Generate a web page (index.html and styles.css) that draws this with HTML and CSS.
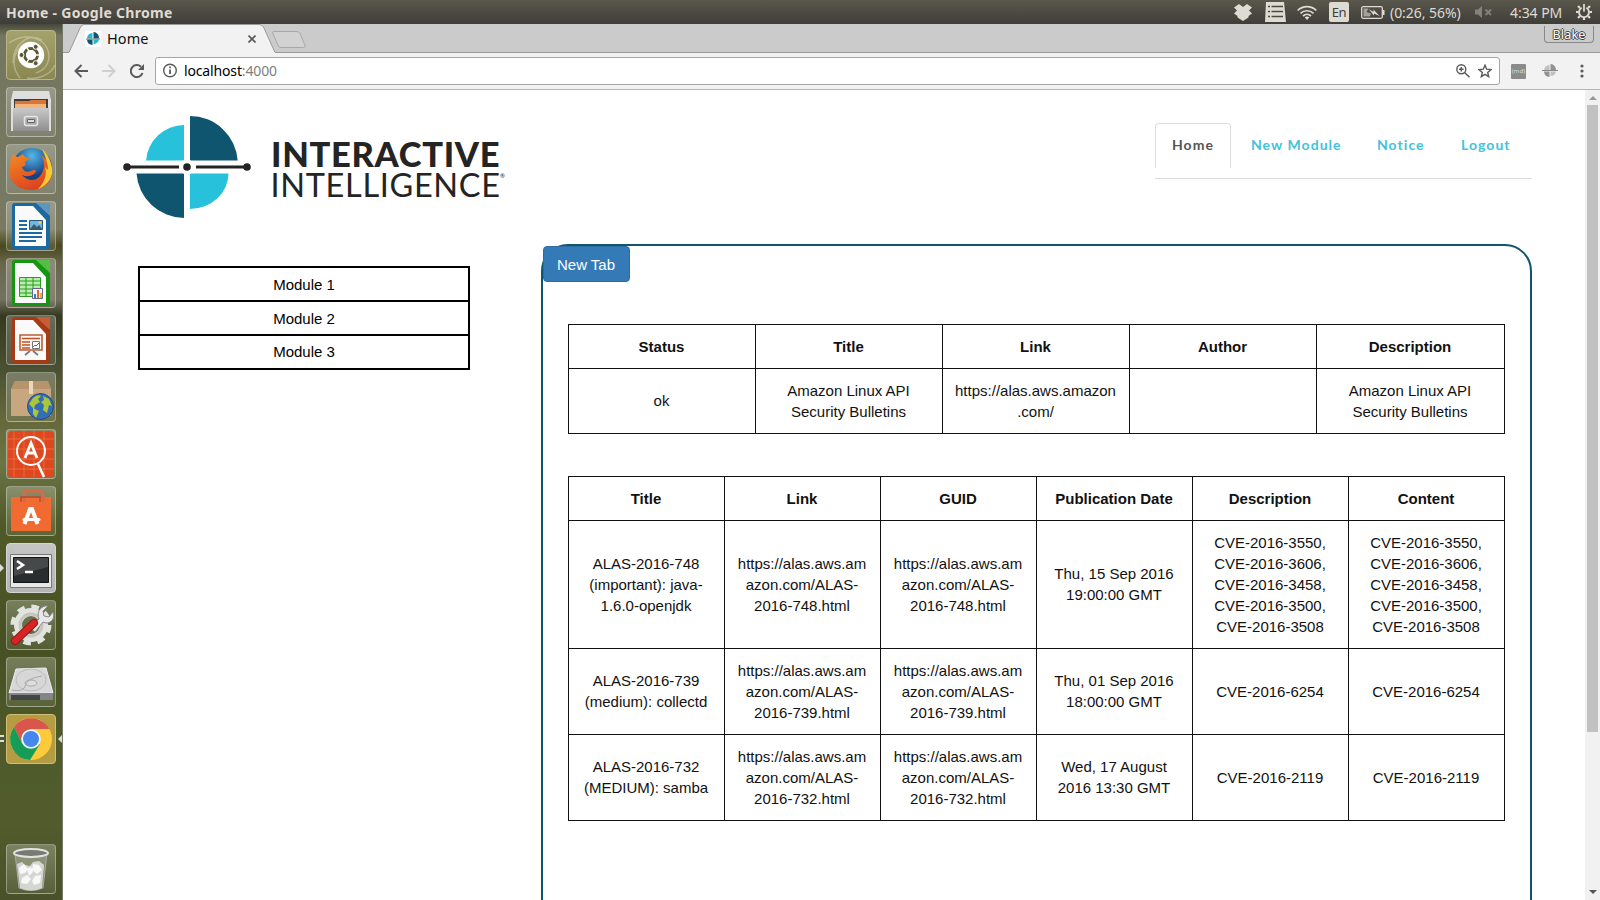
FILE: index.html
```html
<!DOCTYPE html>
<html lang="en">
<head>
<meta charset="utf-8">
<title>Home</title>
<link rel="stylesheet" href="styles.css">
</head>
<body>
<header class="topbar">
  <span class="window-title">Home - Google Chrome</span>
  <div class="indicators">
    <svg class="ind-dropbox" width="18" height="17" viewBox="0 0 18 17"><path fill="#dfdbd2" d="M5 0 9 3 13 0 18 3.500 15 6.500 18 9.500 14.500 12v1.500L9 17 3.500 13.500V12L0 9.500 3 6.500 0 3.500z"/></svg>
    <svg class="ind-list" width="21" height="20" viewBox="0 0 21 20"><path fill="#dfdbd2" d="M1 0h18l2 20H0z"/><path stroke="#4a4843" stroke-width="1.500" d="M3 4.500h2M6.500 4.500H18M3 9.500h2M6.500 9.500H18M3 14.500h2M6.500 14.500H18"/></svg>
    <svg class="ind-wifi" width="20" height="15" viewBox="0 0 20 15"><g fill="none" stroke="#dfdbd2" stroke-width="1.700"><path d="M.7 5.500a13 13 0 0 1 18.600 0M3.500 8.300a9.500 9.500 0 0 1 13 0M6 11a6 6 0 0 1 8 0"/></g><path fill="#dfdbd2" d="M7.600 12.300q2.400-1.700 4.800 0L10 15z"/></svg>
    <span class="keyboard">En</span>
    <svg class="ind-battery" width="24" height="13" viewBox="0 0 24 13"><rect x=".7" y=".7" width="20.600" height="11.600" rx="1.500" fill="none" stroke="#dfdbd2" stroke-width="1.300"/><path fill="#a5a199" d="M2.500 2.500h5L5.500 6l4.500 1.500-1 3H2.500z"/><path fill="#dfdbd2" d="M22 4h1.500v5H22zM7.500 3l5 3V3.500L18.500 10l-5.500-2.500v2z"/></svg>
    <span class="battery-text">(0:26, 56%)</span>
    <svg class="ind-mute" width="17" height="12" viewBox="0 0 17 12"><path fill="#85827a" d="M0 3.500h3L7 0v12L3 8.500H0z"/><path stroke="#85827a" stroke-width="1.800" d="m10.500 3.500 5.500 5.500m0-5.500L10.500 9"/></svg>
    <span class="clock">4:34 PM</span>
    <svg class="ind-gear" width="16" height="16" viewBox="0 0 16 16"><g fill="none" stroke="#dfdbd2"><path stroke-width="1.800" d="M5.700 3.700a5 5 0 1 0 4.600 0M8 0v7.500"/><path stroke-width="2.200" d="m2 2 2 2m10-2-2 2M0 8h2.500M16 8h-2.500M2 14l2-2m10 2-2-2M8 16v-2.500"/></g></svg>
  </div>
</header>
<div class="desktop">
  <nav class="launcher">
    <div class="tile dash"><svg viewBox="0 0 50 50"><g fill="none" stroke="#fff" stroke-opacity=".3" stroke-width="1.500"><path d="M3 13C20 1 42 8 43 26c0 9-6 15-13 17M7 33C7 13 23 3 36 10M14 48C2 33 10 14 24 12M21 48c10 2 24-3 28-13"/></g><circle cx="25" cy="25" r="13.200" fill="#fff"/><circle cx="25" cy="25" r="6.500" fill="none" stroke="#5c5734" stroke-width="3"/><path stroke="#fff" stroke-width="1.500" d="M25 25h10M25 25l-5-9M25 25l-5 9"/><circle cx="25" cy="25" r="4.900" fill="#fff"/><g fill="#5c5734" stroke="#fff"><circle cx="15.500" cy="25" r="2.500"/><circle cx="29.700" cy="16.800" r="2.500"/><circle cx="29.700" cy="33.200" r="2.500"/></g></svg></div>
    <div class="tile"><svg viewBox="0 0 50 50"><defs><linearGradient id="grey" x2="0" y2="1"><stop stop-color="#c9c9c9"/><stop offset="1" stop-color="#8f8f8f"/></linearGradient></defs><path fill="#dedede" d="M7 4h36l2 9v31H5V13z"/><path fill="#453b35" d="M8 12h34v10H8z"/><path fill="#d9763c" d="M9 14h14l2-1h15v9H9z"/><path fill="#f3b57a" d="M9 17h31v5H9z"/><path fill="url(#grey)" d="M7 21h36v23H7z"/><rect x="18.500" y="29.500" width="13" height="9" rx="2" fill="#aaa" stroke="#e6e6e6" stroke-width="1.500"/><path fill="#ddd" stroke="#666" d="M21.500 32.500h7v3h-7z"/></svg></div>
    <div class="tile"><svg viewBox="0 0 50 50"><defs><radialGradient id="fxblue" cx=".5" cy=".2"><stop stop-color="#54b8e9"/><stop offset="1" stop-color="#173f82"/></radialGradient><linearGradient id="fxorange" x2=".5" y2="1"><stop stop-color="#f28a23"/><stop offset="1" stop-color="#dc4420"/></linearGradient></defs><circle cx="26" cy="24" r="20" fill="url(#fxblue)"/><path fill="url(#fxorange)" d="M7 10c2 1 3 3 5 3l5-3c1 2 2 4 6 4 0 2-5 3-4 5 2 2 0 3-3 4 1 5 7 6 11 3 3-1 4 1 2 3-4 4-9 4-13 2 8 9 20 6 22-9 0-5-1-8-3-11 8 6 12 14 11 20-2 10-11 15-21 15C9 46 1 34 4 23c0-5 1-9 3-13z"/><path fill="#f9c832" d="M36 5c8 7 11 17 10 25-2 8-8 13-14 15 8-8 9-16 7-22l3 3c0-6-2-12-6-21z"/></svg></div>
    <div class="tile"><svg viewBox="0 0 50 50"><path fill="#1c69a0" d="M9 2h24l11 12v31q0 3-3 3H9q-3 0-3-3V5q0-3 3-3z"/><path fill="#fafafa" d="M9 5h18l13 14v26H9z"/><path fill="#5f96bb" d="M30 2h14v13z"/><path stroke="#1c69a0" stroke-width="1.800" d="M13 20h8m-8 4h8m-8 4h8m-8 4h23m-23 4h23m-23 4h17"/><path fill="#6eb8e6" stroke="#28577b" d="M23.500 19.500h13v9h-13z"/><path fill="#3e5968" d="m24 28 4-5 3 3 2-2 3 4z"/><circle cx="34" cy="21.500" r="1.300" fill="#ffd24a"/></svg></div>
    <div class="tile"><svg viewBox="0 0 50 50"><path fill="#189415" d="M9 2h24l11 12v31q0 3-3 3H9q-3 0-3-3V5q0-3 3-3z"/><path fill="#fafafa" d="M9 5h18l13 14v26H9z"/><path fill="#55bf45" d="M30 2h14v13z"/><path fill="#b8efae" stroke="#2d9c20" d="M13.500 19.500h21v19h-21zM20 19v19m7-19v19M13 23h21m-21 4h21m-21 4h21m-21 4h21"/><path fill="#f4f6fa" stroke="#668" d="M26.500 30.500h10v10h-10z"/><path fill="#3584c6" d="M28 36h2v4h-2z"/><path fill="#ee6332" d="M31 32h2v8h-2z"/><path fill="#efaf35" d="M34 35h2v5h-2z"/></svg></div>
    <div class="tile"><svg viewBox="0 0 50 50"><path fill="#a63a15" d="M9 2h24l11 12v31q0 3-3 3H9q-3 0-3-3V5q0-3 3-3z"/><path fill="#fafafa" d="M9 5h18l13 14v26H9z"/><path fill="#c55e37" d="M30 2h14v13z"/><path fill="#fff4ee" stroke="#b95d38" stroke-width="1.600" d="M14 20h22v15H14z"/><path stroke="#bf5127" stroke-width="1.700" d="M16 23.500h18M16 27h8m-8 3h8m-8 3h8"/><path fill="#fff" stroke="#777" d="M26.500 26.500h7v7h-7z"/><path fill="none" stroke="#2f8c41" d="m27 32 2-2 1 1 3-3"/><path stroke="#777" stroke-width="1.700" d="m24 36-5 4m8-4 5 4"/></svg></div>
    <div class="tile"><svg viewBox="0 0 50 50"><path fill="#b99068" d="M9 9h33l3 8v27H5V17z"/><path fill="#c7a680" d="M5 17h40v27H5z"/><path fill="#b8946c" d="M9 9h33l3 8H5z"/><path fill="#ead8bd" d="M23 9h4v13h-4z"/><circle cx="34.500" cy="34.500" r="13" fill="#346eb5" stroke="#244b7d"/><path fill="#abc63b" d="M27 26q5-4 8-2l-3 3 2 3-5 3-1 4-5-5zM37 24l6 3 3 7-3-1-2 8-4-3 1-5-3-3 3-2zM27 36l6 3-3 7-3-4z"/></svg></div>
    <div class="tile"><svg viewBox="0 0 50 50"><rect x="2" y="2" width="46" height="46" rx="4" fill="#df481f"/><path stroke="#f07d57" stroke-opacity=".65" d="M8 2v46m10-46v46m10-46v46m10-46v46M2 10h46M2 20h46M2 30h46M2 40h46"/><g fill="none" stroke="#fff"><circle cx="25" cy="22" r="14" stroke-width="2"/><path stroke-width="2.800" d="m19 29 6-15 6 15m-10-5h8"/><path stroke-width="2.500" d="m32 35 6 13"/></g></svg></div>
    <div class="tile"><svg viewBox="0 0 50 50"><path fill="#f06a31" d="M5 11h40v34H5z"/><path fill="none" stroke="#d36a4a" stroke-width="3" d="M18 16V9q0-4 3-4h12q4 0 4 4v7"/><path fill="none" stroke="#b54c2e" stroke-width="1.500" d="M15 16v-5h19v5"/><path fill="none" stroke="#fff" stroke-width="4" d="m18.500 38 5.500-15h2l5.500 15"/><path stroke="#fff" stroke-width="3" stroke-linecap="round" d="M18 33.500h15"/></svg></div>
    <div class="tile terminal"><svg viewBox="0 0 50 50"><path fill="#e8e8e8" stroke="#777" d="M4.500 11.500h41v33h-41z"/><path fill="#292d2e" stroke="#111" d="M7.500 14.500h35v25h-35z"/><path fill="#45494a" d="M8 15h34v9L8 33z"/><path fill="none" stroke="#fff" stroke-width="2.500" d="m11 18 6 4-6 4m8 3h8"/></svg></div>
    <div class="tile"><svg viewBox="0 0 50 50"><g fill="none" stroke="#e2e2df"><circle cx="25" cy="25" r="13" stroke-width="8"/><circle cx="25" cy="25" r="18" stroke-width="5" stroke-dasharray="7.500 6.600"/></g><circle cx="25" cy="25" r="11" fill="none" stroke="#c6c6c1" stroke-width="3"/><path fill="#e8e8e8" stroke="#888" d="m24 28 9-9c-3-7 2-14 9-13l-5 5 1 5 5 1 4-5c3 9-5 13-10 10l-8 10z"/><path stroke="#981717" stroke-width="8" stroke-linecap="round" d="m9 41 19-18"/><path stroke="#d72424" stroke-width="6" stroke-linecap="round" d="m9 41 19-18"/></svg></div>
    <div class="tile"><svg viewBox="0 0 50 50"><path fill="#d7d7d7" stroke="#eee" d="m10 12 30-1 7 25H3z"/><path fill="#858585" d="M3 36h44v7H3z"/><path fill="#444" d="M5 38h29v5H5z"/><ellipse cx="25" cy="23" rx="15" ry="11" fill="none" stroke="#bbb"/><ellipse cx="25" cy="26" rx="6" ry="3" fill="#ddd" stroke="#aaa"/><path fill="none" stroke="#aaa" d="M6 33q12 3 14-6 2-6 16-8"/></svg></div>
    <div class="tile chrome-tile"><svg viewBox="0 0 50 50"><circle cx="25" cy="25" r="21" fill="#fdca3c"/><path fill="#d9564c" d="M8 13A21 21 0 0 1 43.500 15H25l-9 14z"/><path fill="#149c58" d="M8 13A21 21 0 0 0 24 46l10-16-18-1z"/><circle cx="25" cy="25" r="9.800" fill="#f6f6f6"/><circle cx="25" cy="25" r="8" fill="#4587ee"/></svg></div>
    <div class="tile trash"><svg viewBox="0 0 50 50"><path fill="#e5e9df" fill-opacity=".25" stroke="#aaa" d="m9 9 4 35q12 5 24 0l4-35z"/><path fill="#d6d6d1" d="m11 20 5-2 3 3 5 1 3-4 6-1 5 4-2 23q-11 5-22 0z"/><g fill="#f8f8f8"><path d="m13 24 5-4 4 5-3 4-5 1zM27 20l6 1 3 5-5 4-5-4zM16 34l5-3 4 4-4 5-6-1zM29 32l6-1-1 8-6 2-2-4zM21 25l4-2 2 5-4 4z"/></g><ellipse cx="25" cy="9" rx="17" ry="4" fill="#777c72" stroke="#e2e2e2" stroke-width="2"/></svg></div>
    <i class="arrow running-terminal"></i><i class="running-chrome"></i><i class="arrow active-chrome"></i>
  </nav>
  <div class="browser">
    <div class="tabstrip">
      <svg class="tab-shape" width="1537" height="29" viewBox="0 0 1537 29"><path fill="#f2f2f2" stroke="#999" d="M-1 28.500H6L17.500 3Q19 .5 21 .5H196Q199 .5 200.500 3L212 28.500H1538V31H-1z"/><path fill="#d2d2d2" stroke="#a8a8a8" d="M211 7.500h23q2 0 3 2l5 12q.6 2-1.500 2H218q-2 0-2.700-1.500L209.700 9q-.3-1.500 1.300-1.500z"/><path stroke="#f2f2f2" stroke-width="2" d="M6 29H212"/></svg>
      <svg class="favicon" width="16" height="16" viewBox="0 0 16 16"><path fill="#fff" d="M0 0h16v16H0z"/><path fill="#28b7d3" d="M2 7.500A6 6 0 0 1 7.500 2v5.500zM8.500 8.500H14A6 6 0 0 1 8.500 13z"/><path fill="#0f566f" d="M8.500 1A6 6 0 0 1 14 7.500H8.500zM2 8.500h5.500V14A6 6 0 0 1 2 8.500z"/><path stroke="#777" d="M1 8h14"/></svg>
      <span class="tab-title">Home</span>
      <svg class="tab-close" width="8" height="8" viewBox="0 0 8 8"><path stroke="#555" stroke-width="1.600" d="m.5.5 7 7m0-7-7 7"/></svg>
      <span class="profile">Blake</span>
    </div>
    <div class="toolbar">
      <svg width="15" height="14" viewBox="0 0 15 14"><path fill="none" stroke="#5a5a5a" stroke-width="2" d="M14 7H1.500M7.500 1l-6 6 6 6"/></svg>
      <svg width="15" height="14" viewBox="0 0 15 14"><path fill="none" stroke="#d0d0d0" stroke-width="2" d="M0 7h12.500M6.500 1l6 6-6 6"/></svg>
      <svg width="15" height="14" viewBox="0 0 15 14"><path fill="none" stroke="#5a5a5a" stroke-width="2" d="M12.500 9A6 6 0 1 1 11 2.800"/><path fill="#5a5a5a" d="M14 0v6H8z"/></svg>
      <div class="omnibox">
        <svg width="15" height="15" viewBox="0 0 15 15"><circle cx="7" cy="7.500" r="6.300" fill="none" stroke="#5a5a5a" stroke-width="1.400"/><path stroke="#5a5a5a" stroke-width="1.800" d="M7 6.500V11M7 3.500v1.700"/></svg>
        <span class="url">localhost<span class="port">:4000</span></span>
        <svg width="14" height="14" viewBox="0 0 14 14"><circle cx="5.300" cy="5.300" r="4.500" fill="none" stroke="#5a5a5a" stroke-width="1.400"/><path stroke="#5a5a5a" stroke-width="1.500" d="m8.500 8.500 5 4.800M5.300 3v4.600M3 5.300h4.600"/></svg>
        <svg class="star" width="14" height="14" viewBox="0 0 14 14"><path fill="none" stroke="#5a5a5a" stroke-width="1.400" d="m7 1.200 1.700 4 4.300.4-3.300 2.800 1 4.300L7 10.400l-3.700 2.300 1-4.300L1 5.600l4.300-.4z"/></svg>
      </div>
      <span class="md">(md)</span>
      <svg class="target" width="16" height="14" viewBox="0 0 16 14"><path fill="#c1c1c1" d="M2 6.500A6 6 0 0 1 7.500 1v5.500zM8.500 7.500H14A6 6 0 0 1 8.500 12z"/><path fill="#929292" d="M8.500 0A6 6 0 0 1 14 6.500H8.500zM2 7.500h5.500V13A6 6 0 0 1 2 7.500z"/><path stroke="#888" d="M0 6.500h16"/></svg>
      <svg class="dots" width="4" height="14" viewBox="0 0 4 14"><g fill="#5a5a5a"><circle cx="2" cy="2" r="1.600"/><circle cx="2" cy="7" r="1.600"/><circle cx="2" cy="12" r="1.600"/></g></svg>
    </div>
    <div class="viewport">
      <main class="page">
        <div class="page-head">
          <svg class="logo" width="390" height="110" viewBox="120 112 390 110">
            <path fill="#27c1db" d="M184 125v35.500H146A38.500 38.500 0 0 1 184 125zM190 173.500h38.500A38.500 35.500 0 0 1 190 209z"/>
            <path fill="#10556f" d="M190 116a48 48 0 0 1 47.700 44.500H190zM184 173.500V218a48 48 0 0 1-47.500-44.500z"/>
            <circle cx="187" cy="167" r="7.500" fill="#fff"/>
            <path stroke="#242424" stroke-width="3" d="M127 167h52M196 167h51"/>
            <g fill="#242424"><circle cx="127" cy="167" r="3.800"/><circle cx="187" cy="167" r="3.800"/><circle cx="247" cy="167" r="3.800"/></g>
            <text class="logo-bold" x="271" y="166.500" textLength="228.500">INTERACTIVE</text>
            <text class="logo-light" x="270.500" y="196.500" textLength="229.500">INTELLIGENCE</text>
            <text class="logo-reg" x="500" y="178">®</text>
          </svg>
          <ul class="nav-tabs">
            <li class="active">Home</li><li class="n2">New Module</li><li class="n3">Notice</li><li class="n4">Logout</li>
          </ul>
        </div>
        <div class="columns">
          <ul class="modules"><li>Module 1</li><li>Module 2</li><li>Module 3</li></ul>
          <section class="panel">
            <button class="btn">New Tab</button>
            <table class="feed">
              <tr><th>Status</th><th>Title</th><th>Link</th><th>Author</th><th>Description</th></tr>
              <tr><td>ok</td><td>Amazon Linux API<br>Security Bulletins</td><td>https://alas.aws.amazon<br>.com/</td><td></td><td>Amazon Linux API<br>Security Bulletins</td></tr>
            </table>
            <table>
              <tr><th>Title</th><th>Link</th><th>GUID</th><th>Publication Date</th><th>Description</th><th>Content</th></tr>
              <tr><td>ALAS-2016-748<br>(important): java-<br>1.6.0-openjdk</td><td>https://alas.aws.am<br>azon.com/ALAS-<br>2016-748.html</td><td>https://alas.aws.am<br>azon.com/ALAS-<br>2016-748.html</td><td>Thu, 15 Sep 2016<br>19:00:00 GMT</td><td>CVE-2016-3550,<br>CVE-2016-3606,<br>CVE-2016-3458,<br>CVE-2016-3500,<br>CVE-2016-3508</td><td>CVE-2016-3550,<br>CVE-2016-3606,<br>CVE-2016-3458,<br>CVE-2016-3500,<br>CVE-2016-3508</td></tr>
              <tr><td>ALAS-2016-739<br>(medium): collectd</td><td>https://alas.aws.am<br>azon.com/ALAS-<br>2016-739.html</td><td>https://alas.aws.am<br>azon.com/ALAS-<br>2016-739.html</td><td>Thu, 01 Sep 2016<br>18:00:00 GMT</td><td>CVE-2016-6254</td><td>CVE-2016-6254</td></tr>
              <tr><td>ALAS-2016-732<br>(MEDIUM): samba</td><td>https://alas.aws.am<br>azon.com/ALAS-<br>2016-732.html</td><td>https://alas.aws.am<br>azon.com/ALAS-<br>2016-732.html</td><td>Wed, 17 August<br>2016 13:30 GMT</td><td>CVE-2016-2119</td><td>CVE-2016-2119</td></tr>
            </table>
          </section>
        </div>
      </main>
      <div class="scrollbar"><i class="up"></i><div class="thumb"></div><i class="down"></i></div>
    </div>
  </div>
</div>
</body>
</html>
```
FILE: styles.css
```css
* { box-sizing: border-box; }
body { margin: 0; width: 1600px; height: 900px; overflow: hidden; display: flex; flex-direction: column; font-family: "Noto Sans", sans-serif; background: #fff; }
svg { display: block; flex: none; }
ul { list-style: none; margin: 0; padding: 0; }

.topbar { height: 24px; flex: none; display: flex; justify-content: space-between; align-items: center; padding: 0 8px 0 6px; background: linear-gradient(#5a574d, #3e3d38); color: #dfdbd2; white-space: nowrap; }
.window-title { font-size: 14px; font-weight: 700; letter-spacing: .3px; }
.indicators { display: flex; align-items: center; font-size: 14px; }
.ind-list { margin-left: 13px; }
.ind-wifi { margin-left: 11px; }
.keyboard { width: 20px; height: 20px; margin-left: 12px; border-radius: 2px; background: #dfdbd2; color: #3f3e39; font-size: 13px; line-height: 20px; text-align: center; letter-spacing: -.4px; }
.ind-battery { margin-left: 12px; }
.battery-text { width: 73px; margin-left: 5px; letter-spacing: -.05px; }
.ind-mute { margin-left: 12px; }
.clock { width: 53px; margin-left: 18px; letter-spacing: -.05px; }
.ind-gear { margin-left: 13px; }

.desktop { flex: 1; display: flex; min-height: 0; }
.launcher { width: 63px; flex: none; position: relative; display: flex; flex-direction: column; gap: 7px; padding: 6px; border-right: 1px solid #777767; background: linear-gradient(#47483c, #74765f 12px, #777963 180px, #7a7a60 205px, #49491f 222px, #68674d 240px, #747260 275px, #36391f 292px, #4a5031 345px, #66683b 395px, #6b7446 440px, #505a28 500px, #465023 620px, #505b2b 740px, #525b2c 800px, #48512a); }
.tile { width: 50px; height: 50px; flex: none; border: 1px solid rgba(255,255,255,.32); border-radius: 4px; background: linear-gradient(rgba(255,255,255,.25), rgba(255,255,255,.08)); }
.tile svg { width: 50px; height: 50px; margin: -1px; }
.dash { background: linear-gradient(#a4a26c, #8b8750); border-color: #b9b688; }
.terminal { background: linear-gradient(#c4c4c4, #b4b4b4); border-color: #d5d5d5; }
.chrome-tile { background: #b49c43; border-color: #cfbd78; }
.trash { margin-top: auto; }
.arrow { position: absolute; width: 0; height: 0; border: 4px solid transparent; }
.running-terminal { left: 0; top: 540px; border-left-color: #ddd; border-right: 0; }
.active-chrome { right: 0; top: 711px; border-right-color: #ddd; border-left: 0; }
.running-chrome { position: absolute; left: 0; top: 711px; width: 4px; height: 7px; border: solid #ddd; border-width: 2px 0; }

.browser { flex: 1; display: flex; flex-direction: column; min-width: 0; }
.tabstrip { height: 29px; flex: none; position: relative; display: flex; align-items: center; padding-left: 22px; background: #cbcbcb; }
.tab-shape { position: absolute; left: 0; top: 0; }
.favicon, .tab-title, .tab-close { position: relative; }
.tab-title { width: 141px; margin-left: 6px; padding-bottom: 2px; font-size: 14.5px; letter-spacing: .1px; color: #111; }
.profile { position: relative; align-self: flex-start; width: 50px; height: 17px; margin: 2px 6px 0 auto; border: 1px solid #888; border-top: 0; border-radius: 0 0 4px 4px; color: #fff; font-size: 12.5px; line-height: 18px; text-align: center; letter-spacing: .2px; text-shadow: 1px 0 #444, -1px 0 #444, 0 1px #444, 0 -1px #444; }
.toolbar { height: 37px; flex: none; display: flex; align-items: center; gap: 13px; padding: 0 16px 0 11px; background: #f2f2f2; border-bottom: 1px solid #b5b5b5; }
.omnibox { flex: none; width: 1345px; height: 28px; display: flex; align-items: center; padding: 0 7px; margin: 0 0 1px -3px; background: #fff; border: 1px solid #a6a6a6; border-radius: 3px; }
.url { margin: 0 auto 0 6px; padding-bottom: 1px; font-size: 14px; letter-spacing: -.15px; color: #000; }
.port { color: #808080; }
.star { margin-left: 8px; }
.md { width: 15px; height: 15px; margin-left: -2px; border-radius: 1px; background: #8b8b8b; color: #ddd; font-size: 6px; line-height: 14px; text-align: center; }
.target { margin-left: 3px; }
.dots { margin-left: auto; }

.viewport { flex: 1; display: flex; min-height: 0; font-family: "Liberation Sans", Arial, sans-serif; font-size: 15px; color: #000; }
.page { flex: 1; overflow: hidden; background: #fff; }
.page-head { height: 154px; display: flex; justify-content: space-between; align-items: flex-start; padding: 0 53px 0 57px; }
.logo { margin-top: 22px; }
.logo text { font-family: Lato, sans-serif; fill: #242424; }
.logo .logo-bold { font-size: 34.5px; font-weight: 900; }
.logo .logo-light { font-size: 32.5px; font-weight: 400; }
.logo .logo-reg { font-size: 6px; }
.nav-tabs { display: flex; width: 377px; height: 56px; margin-top: 33px; border-bottom: 1px solid #ddd; font-family: Lato, sans-serif; font-size: 14px; font-weight: 700; line-height: 42px; letter-spacing: 1.05px; color: #43c3da; white-space: nowrap; }
.nav-tabs li { padding-top: 1px; }
.nav-tabs .active { width: 76px; height: 45px; padding: 0 0 0 16px; border: 1px solid #ddd; border-bottom: 0; border-radius: 4px 4px 0 0; color: #555; }
.nav-tabs .n2 { width: 127px; padding-left: 20px; }
.nav-tabs .n3 { width: 84px; padding-left: 19px; }
.nav-tabs .n4 { padding-left: 19px; }
.columns { display: flex; align-items: flex-start; padding-left: 75px; }
.modules { width: 332px; flex: none; margin-top: 22px; border: 2px solid #000; text-align: center; }
.modules li { height: 34px; line-height: 33px; border-bottom: 2px solid #000; }
.modules li:last-child { height: 32px; border-bottom: 0; line-height: 32px; }
.panel { width: 991px; height: 800px; flex: none; margin-left: 71px; border: 2px solid #10556f; border-radius: 27px; }
.btn { display: block; width: 87px; height: 36px; padding: 0 1px 0 0; border: 1px solid #2e6da4; border-radius: 4px; background: #337ab7; color: #fff; font: 15px "Liberation Sans", Arial, sans-serif; }
table { width: 937px; margin: 42px 0 0 25px; border-collapse: collapse; table-layout: fixed; color: #111; line-height: 21px; text-align: center; }
th, td { padding: 10.6px 1px 11.4px 0; border: 1px solid #111; white-space: nowrap; }
.feed th:not(:last-child) { width: 187px; }
.scrollbar { width: 15px; flex: none; display: flex; flex-direction: column; align-items: center; padding: 6px 0; background: #f1f1f1; }
.thumb { width: 11px; height: 627px; margin: 5px 0 auto; background: #c1c1c1; }
.up, .down { border: 4px solid transparent; }
.up { border-top: 0; border-bottom-color: #999; }
.down { border-bottom: 0; border-top-color: #555; }
```
